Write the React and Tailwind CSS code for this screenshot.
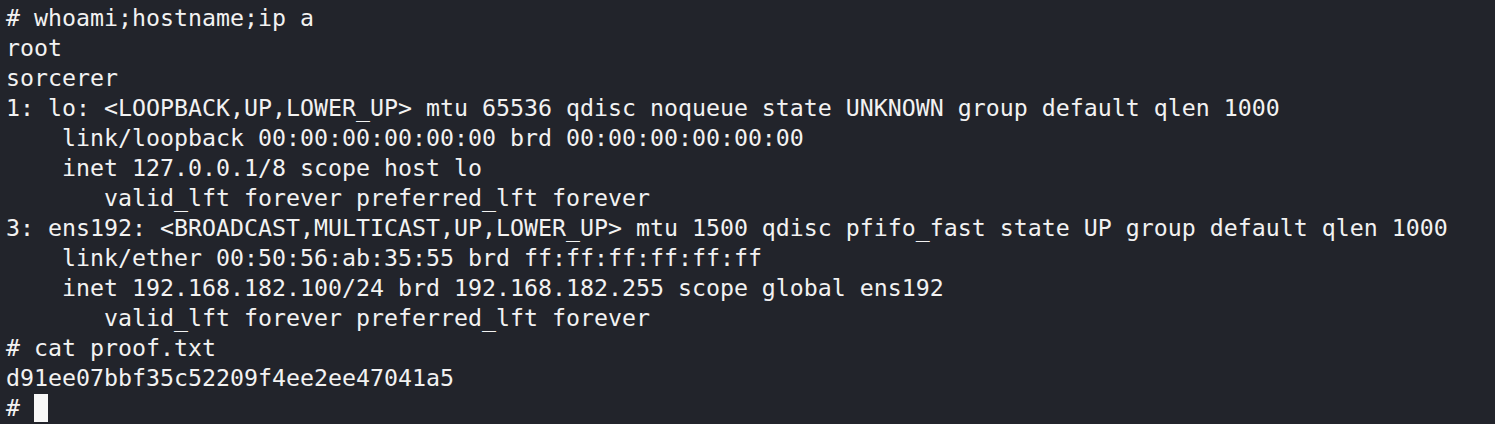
export default function App() {
  const lines = [
    "# whoami;hostname;ip a",
    "root",
    "sorcerer",
    "1: lo: <LOOPBACK,UP,LOWER_UP> mtu 65536 qdisc noqueue state UNKNOWN group default qlen 1000",
    "    link/loopback 00:00:00:00:00:00 brd 00:00:00:00:00:00",
    "    inet 127.0.0.1/8 scope host lo",
    "       valid_lft forever preferred_lft forever",
    "3: ens192: <BROADCAST,MULTICAST,UP,LOWER_UP> mtu 1500 qdisc pfifo_fast state UP group default qlen 1000",
    "    link/ether 00:50:56:ab:35:55 brd ff:ff:ff:ff:ff:ff",
    "    inet 192.168.182.100/24 brd 192.168.182.255 scope global ens192",
    "       valid_lft forever preferred_lft forever",
    "# cat proof.txt",
    "d91ee07bbf35c52209f4ee2ee47041a5",
  ];
  return (
    <div className="w-[1495px] h-[424px] bg-[#22242b] text-[#f2f2f2] overflow-hidden pl-[6px] pt-[3px] font-['DejaVu_Sans_Mono',monospace] text-[23.25px] leading-[30px] whitespace-pre">
      {lines.map((l, i) => (
        <div key={i}>{l}</div>
      ))}
      <div className="flex items-center h-[30px]">
        <span># </span>
        <span className="inline-block w-[14px] h-[28px] bg-[#f8f8f8]"></span>
      </div>
    </div>
  );
}
